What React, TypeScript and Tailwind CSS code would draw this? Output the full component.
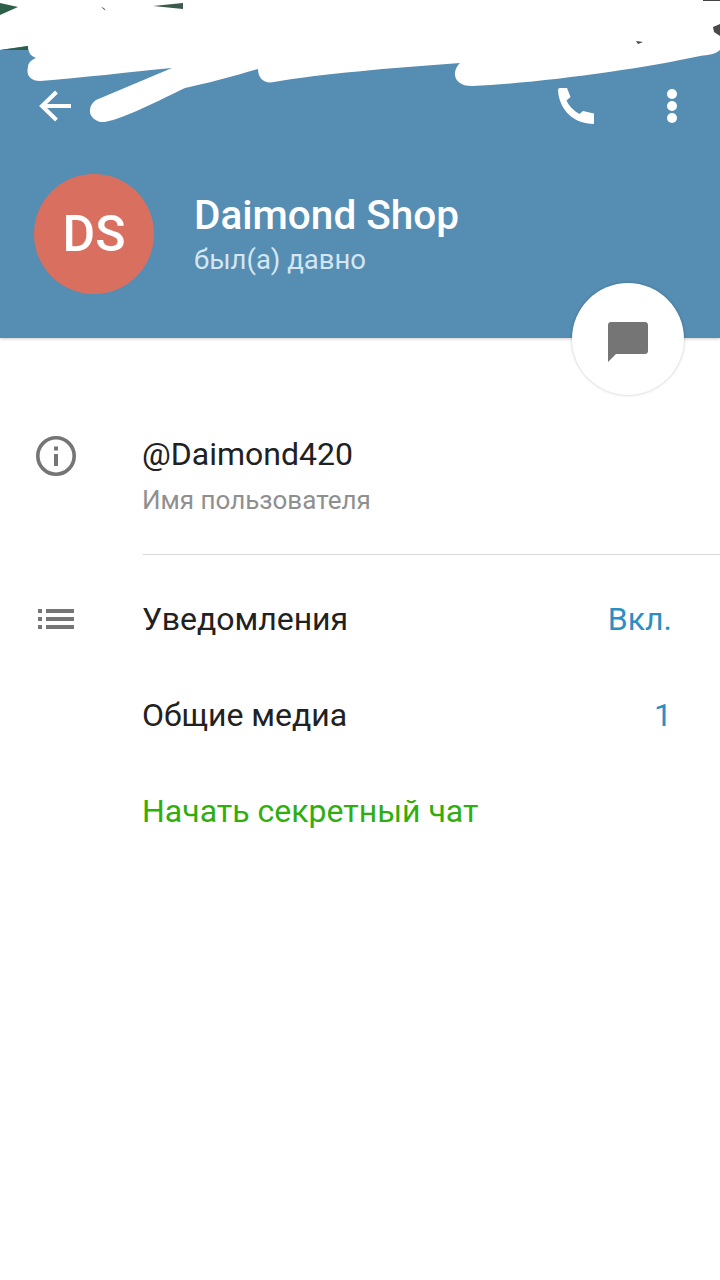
const roboto = { fontFamily: 'Roboto, "Noto Sans", sans-serif' };

function Scribble() {
  return (
    <svg className="absolute left-0 top-0 h-[125px] w-[720px]" viewBox="0 0 720 125">
      <path
        fill="#ffffff"
        d="M0 0H720V50C716 54 708 55 700 56C640 69 540 83 472 86C460 86 454 80 455 72C456 68 457 66 460 63C390 68 320 74 274 82C264 84 258 78 258 69C235 76 205 84 185 88C160 100 125 118 105 122C96 123 89 116 90 110C90 106 92 103 96 100L172 68C130 72 80 78 40 81C30 81 26 75 28 67C28 63 31 60 36 58C30 56 28 51 28 46L0 50Z"
      />
      <path fill="#2f5f48" d="M0 3L18 7L0 15Z" />
      <path fill="#2f5f48" d="M0 50L28 46L28 50Z" />
      <path fill="#3a5a4a" d="M153 6L183 3V9Z" />
      <path fill="#44594f" d="M101 7L104 8L106 11Z" />
      <path fill="#444444" d="M636 41L643 42L638 44Z" />
      <path fill="#4a4a4a" d="M720 24L713 27L714 32L720 36Z" />
      <path fill="#444444" d="M703 0H720V1H703Z" />
    </svg>
  );
}

function BackIcon() {
  return (
    <svg width="34" height="32" viewBox="0 0 34 32" fill="none" stroke="#ffffff" strokeWidth="4">
      <path d="M33 16H4" />
      <path d="M18.5 2L4 16L18.5 30" />
    </svg>
  );
}

function PhoneIcon() {
  return (
    <svg width="36" height="36" viewBox="0 0 36 36" fill="#ffffff">
      <path d="M0 2Q0 0 2 0H9L12.5 9L8.5 12.5C11 18 16 23 21.5 26L25 23L36 25.5V36C16 36 1 22 0 2Z" />
    </svg>
  );
}

function DotsIcon() {
  return (
    <div className="flex flex-col gap-[2px]">
      <span className="h-[10px] w-[10px] rounded-full bg-white" />
      <span className="h-[10px] w-[10px] rounded-full bg-white" />
      <span className="h-[10px] w-[10px] rounded-full bg-white" />
    </div>
  );
}

function InfoIcon() {
  return (
    <svg width="40" height="40" viewBox="0 0 40 40" fill="none">
      <circle cx="20" cy="20" r="18.2" stroke="#757575" strokeWidth="3.6" />
      <rect x="18" y="18" width="4" height="12" fill="#757575" />
      <rect x="18" y="10.5" width="4" height="4" fill="#757575" />
    </svg>
  );
}

function ListIcon() {
  return (
    <svg width="36" height="20" viewBox="0 0 36 20" fill="#757575">
      <rect x="0" y="0" width="4" height="4" />
      <rect x="8" y="0" width="28" height="4" />
      <rect x="0" y="8" width="4" height="4" />
      <rect x="8" y="8" width="28" height="4" />
      <rect x="0" y="16" width="4" height="4" />
      <rect x="8" y="16" width="28" height="4" />
    </svg>
  );
}

function ChatIcon() {
  return (
    <svg width="40" height="40" viewBox="0 0 40 40" fill="#757575">
      <path d="M3 0H37C38.7 0 40 1.3 40 3V29C40 30.7 38.7 32 37 32H8L0 40V3C0 1.3 1.3 0 3 0Z" />
    </svg>
  );
}

export default function App() {
  return (
    <div className="relative h-[1280px] w-[720px] overflow-hidden bg-white" style={roboto}>
      {/* Шапка профиля */}
      <header className="flex h-[338px] flex-col bg-[#568db3] pl-[34px] pr-[43px] pt-[82px] shadow-[0_1px_3px_rgba(0,0,0,0.2)]">
        <div className="flex h-[48px] items-center">
          <div className="ml-[4px]">
            <BackIcon />
          </div>
          <div className="ml-auto">
            <PhoneIcon />
          </div>
          <div className="ml-[73px]">
            <DotsIcon />
          </div>
        </div>
        <div className="mt-[44px] flex items-center gap-[40px]">
          <div className="flex h-[120px] w-[120px] items-center justify-center rounded-full bg-[#d9705f] text-[50px] font-medium text-white">
            DS
          </div>
          <div className="flex flex-col">
            <span className="text-[40.5px] font-medium leading-[44px] text-white">Daimond Shop</span>
            <span className="mt-[7px] text-[27.5px] leading-[32px] text-[#d3e6f1]">был(а) давно</span>
          </div>
        </div>
      </header>

      {/* Кнопка сообщения */}
      <button className="absolute left-[572px] top-[283px] flex h-[112px] w-[112px] items-center justify-center rounded-full bg-white pt-[6px] shadow-[0_0_3px_rgba(0,0,0,0.25)]">
        <ChatIcon />
      </button>

      <main className="flex flex-col">
        <div className="flex pl-[36px] pt-[98px]">
          <InfoIcon />
          <div className="ml-[66px] flex flex-1 flex-col">
            <span className="-mt-[2px] text-[32px] leading-[40px] text-[#212121]">@Daimond420</span>
            <span className="mt-[10px] text-[26px] leading-[32px] text-[#8f8f8f]">Имя пользователя</span>
          </div>
        </div>
        <div className="ml-[143px] mt-[38px] h-[1px] bg-[#d9d9d9]" />

        <div className="mt-[16px] flex h-[96px] items-center pl-[38px] pr-[48px]">
          <ListIcon />
          <span className="ml-[68px] text-[32px] text-[#212121]">Уведомления</span>
          <span className="ml-auto text-[32px] text-[#2b8fc4]">Вкл.</span>
        </div>
        <div className="flex h-[96px] items-center pl-[142px] pr-[48px]">
          <span className="text-[32px] text-[#212121]">Общие медиа</span>
          <span className="ml-auto text-[32px] text-[#2b8fc4]">1</span>
        </div>
        <div className="flex h-[96px] items-center pl-[142px]">
          <span className="text-[32px] text-[#2fae0e]">Начать секретный чат</span>
        </div>
      </main>

      <Scribble />
    </div>
  );
}
